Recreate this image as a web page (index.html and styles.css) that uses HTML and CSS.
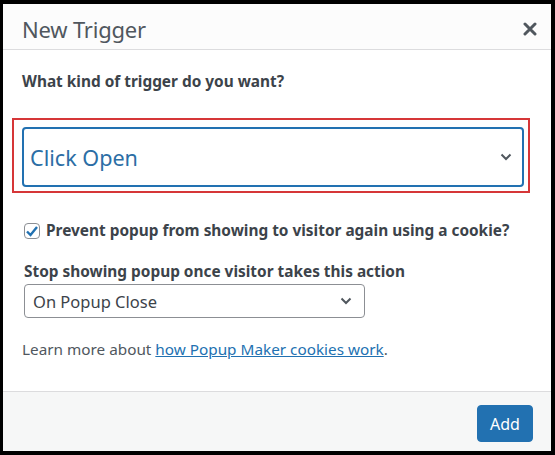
FILE: index.html
```html
<!DOCTYPE html>
<html>
<head>
<meta charset="utf-8">
<link rel="stylesheet" href="styles.css">
</head>
<body>
<div class="frame">
  <div class="modal">
    <div class="header">
      <span class="title">New Trigger</span>
      <span class="close" aria-label="close">
        <svg width="14" height="14" viewBox="0 0 14 14"><path d="M2 2L12 12M12 2L2 12" stroke="#50575e" stroke-width="3" stroke-linecap="round"/></svg>
      </span>
    </div>
    <div class="content">
      <div class="question">What kind of trigger do you want?</div>
      <div class="highlight">
        <div class="select-big">
          <span>Click Open</span>
          <svg class="chev" width="12" height="8" viewBox="0 0 12 8"><path d="M1.5 1.5L6 6L10.5 1.5" fill="none" stroke="#50575e" stroke-width="2"/></svg>
        </div>
      </div>
      <div class="check-row">
        <span class="checkbox">
          <svg width="14" height="12" viewBox="0 0 14 12"><path d="M2 6.5L5.5 10L12 2" fill="none" stroke="#2271b1" stroke-width="2.4"/></svg>
        </span>
        <span class="check-label">Prevent popup from showing to visitor again using a cookie?</span>
      </div>
      <div class="stop-label">Stop showing popup once visitor takes this action</div>
      <div class="select-small">
        <span>On Popup Close</span>
        <svg class="chev" width="12" height="8" viewBox="0 0 12 8"><path d="M1.5 1.5L6 6L10.5 1.5" fill="none" stroke="#50575e" stroke-width="2"/></svg>
      </div>
      <div class="learn">Learn more about <a href="#">how Popup Maker cookies work</a>.</div>
    </div>
    <div class="footer">
      <button class="add">Add</button>
    </div>
  </div>
</div>
</body>
</html>
```
FILE: styles.css
```css
* { box-sizing: border-box; }
html, body { margin: 0; padding: 0; }
body {
  background: #000;
  font-family: "Noto Sans", "Open Sans", sans-serif;
  color: #3c434a;
}
.frame {
  width: 555px;
  height: 455px;
  padding: 4px 4px 4px 3px;
}
.modal {
  background: #fff;
  height: 447px;
  display: flex;
  flex-direction: column;
}
.header {
  height: 46px;
  border-bottom: 1px solid #dcdcde;
  display: flex;
  align-items: center;
  justify-content: space-between;
  padding: 4px 14px 0 19px;
  background: #fcfcfc;
}
.title {
  font-size: 22px;
  color: #50575e;
  letter-spacing: -0.2px;
}
.close { display: flex; }
.content {
  flex: 1;
  padding: 22px 21px 0 19px;
}
.question {
  font-size: 15.4px;
  font-weight: 700;
  line-height: 20px;
  color: #3c434a;
}
.highlight {
  margin: 26px 0 0 -10px;
  border: 2px solid #d63638;
  padding: 7px 4px 4px 8px;
  width: 518px;
}
.select-big {
  height: 60px;
  border: 2px solid #2271b1;
  border-radius: 4px;
  display: flex;
  align-items: center;
  justify-content: space-between;
  padding: 0 10px 0 6px;
  font-size: 21.6px;
  color: #2c6ea5;
}
.check-row {
  margin-top: 28px;
  display: flex;
  align-items: center;
  gap: 6px;
  padding-left: 2px;
}
.checkbox {
  width: 16px;
  height: 16px;
  border: 1px solid #8c8f94;
  border-radius: 4px;
  display: flex;
  align-items: center;
  justify-content: center;
}
.check-label, .stop-label {
  font-size: 15.4px;
  font-weight: 700;
  line-height: 20px;
}
.stop-label {
  margin-top: 21px;
  padding-left: 2px;
}
.select-small {
  margin: 2px 0 0 2px;
  width: 341px;
  height: 34px;
  border: 1px solid #8c8f94;
  border-radius: 4px;
  display: flex;
  align-items: center;
  justify-content: space-between;
  padding: 0 12px 0 8px;
  font-size: 16.5px;
  color: #3c434a;
}
.learn {
  margin-top: 21px;
  font-size: 15.3px;
  line-height: 20px;
  color: #50575e;
}
.learn a { color: #2271b1; }
.footer {
  height: 60px;
  border-top: 1px solid #dcdcde;
  background: #f6f7f7;
  display: flex;
  align-items: flex-start;
  justify-content: flex-end;
  padding: 13px 18px 0 0;
}
.add {
  width: 56px;
  height: 37px;
  background: #2271b1;
  border: 1px solid #2271b1;
  border-radius: 4px;
  color: #fff;
  font-family: inherit;
  font-size: 16px;
  padding: 0;
}
```
